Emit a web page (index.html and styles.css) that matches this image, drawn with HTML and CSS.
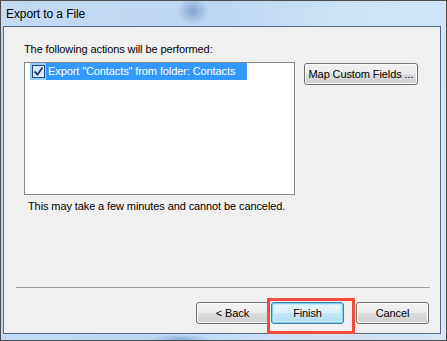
FILE: index.html
```html
<!DOCTYPE html>
<html lang="en">
  <head>
    <meta charset="UTF-8" />
    <title>Export to a File</title>
    <link rel="stylesheet" href="styles.css">
  </head>

  <body>
    <div class="window">
      <div class="titlebar">Export to a File</div>

      <div class="client">
        <p class="label">The following actions will be performed:</p>

        <div class="row">
          <div class="list">
            <div class="item">
              <span class="check">
                <svg width="11" height="11" viewBox="0 0 11 11">
                  <path d="M1.5 5.5 L4.5 8.5 L9.5 1.5" fill="none" stroke="#21406b" stroke-width="1.8" />
                </svg>
              </span>
              <span class="item-text">Export "Contacts" from folder: Contacts</span>
            </div>
          </div>
          <button class="btn map">Map Custom Fields ...</button>
        </div>

        <p class="note">This may take a few minutes and cannot be canceled.</p>

        <div class="separator"></div>

        <div class="buttons">
          <button class="btn">&lt; Back</button>
          <button class="btn finish">Finish</button>
          <button class="btn cancel">Cancel</button>
        </div>
      </div>
    </div>
  </body>
</html>
```

FILE: styles.css
```css
* {
  margin: 0;
  padding: 0;
  box-sizing: border-box;
}

body {
  background: #ffffff;
  font-family: "Liberation Sans", Arial, sans-serif;
  font-size: 11px;
  letter-spacing: -0.1px;
  color: #000000;
}

.window {
  width: 447px;
  height: 341px;
  border: 1px solid #4a4a4a;
  display: flex;
  flex-direction: column;
  background:
    radial-gradient(ellipse 16px 14px at 192px 10px, rgba(90, 130, 180, 0.6), transparent),
    radial-gradient(ellipse 30px 4px at 180px 338px, rgba(90, 130, 180, 0.5), transparent),
    linear-gradient(100deg, #c3daf2 0%, #bcd8f5 45%, #cfe3f7 70%, #d4e6f8 100%);
}

.titlebar {
  height: 25px;
  padding: 6px 0 0 5px;
  font-size: 12px;
  line-height: 15px;
  color: #000000;
}

.client {
  margin-left: 2px;
  width: 438px;
  height: 308px;
  border: 1px solid #55657c;
  background: #f0f0f0;
  display: flex;
  flex-direction: column;
}

.label {
  padding: 15px 0 0 20px;
  line-height: 15px;
  color: #000000;
}

.row {
  display: flex;
  margin-top: 5px;
  padding-left: 20px;
}

.list {
  width: 271px;
  height: 133px;
  border: 1px solid #828790;
  background: #ffffff;
  padding: 0 0 0 5px;
}

.item {
  display: flex;
  align-items: center;
  height: 17px;
  width: 217px;
}

.check {
  width: 16px;
  height: 17px;
  background: #99c9f9;
  display: flex;
  align-items: center;
  justify-content: center;
}

.check svg {
  width: 13px;
  height: 13px;
  border: 1px solid #1c4d7e;
  background: #dbe9f7;
}

.item-text {
  flex: 1;
  height: 17px;
  line-height: 17px;
  background: #3399ff;
  color: #ffffff;
  padding-left: 2px;
  white-space: nowrap;
  overflow: hidden;
}

.btn {
  font-family: inherit;
  font-size: 11px;
  letter-spacing: -0.1px;
  color: #000000;
  width: 73px;
  height: 22px;
  white-space: nowrap;
  border: 1px solid #707070;
  border-radius: 3px;
  background: linear-gradient(#f2f2f2 0%, #ebebeb 48%, #dddddd 52%, #cfcfcf 100%);
  box-shadow: inset 0 0 0 1px #fbfbfb;
}

.map {
  width: 114px;
  margin: 1px 0 0 9px;
}

.note {
  padding: 4px 0 0 24px;
  line-height: 15px;
}

.separator {
  margin: 73px 0 0 12px;
  width: 414px;
  border-top: 1px solid #a0a0a0;
}

.buttons {
  display: flex;
  margin: 14px 0 0 192px;
}

.finish {
  position: relative;
  margin-left: 2px;
  border-color: #3c7fb1;
  background: linear-gradient(#eaf6fd 0%, #d9f0fc 48%, #c6e7fa 52%, #b2dcf3 100%);
  box-shadow: inset 0 0 0 1px #7fd0f5, inset 0 0 0 2px #c9ecfc;
}

.finish::after {
  content: "";
  position: absolute;
  left: -5px;
  top: -5px;
  width: 82px;
  height: 30px;
  border: 3px solid #f24b3c;
}

.cancel {
  margin-left: 12px;
}
```
